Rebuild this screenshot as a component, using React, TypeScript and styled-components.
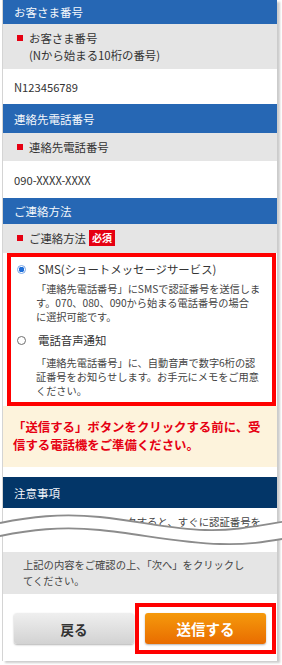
import styled, { createGlobalStyle } from "styled-components";

const GlobalStyle = createGlobalStyle`
  body {
    margin: 0;
    background: #fff;
    font-family: "Noto Sans CJK JP", "Noto Sans", sans-serif;
    color: #333;
  }
`;

const Page = styled.div`
  width: 282px;
  height: 665px;
  box-sizing: border-box;
  padding: 0 5px 0 2px;
  overflow: hidden;
`;

const Card = styled.div`
  background: #fff;
  border-left: 1px solid #d4d4d4;
  box-shadow: 3px 2px 2px rgba(0, 0, 0, 0.2);
  padding-bottom: 7px;
`;

const SectionHead = styled.div<{ $h: number; $navy?: boolean }>`
  height: ${(p) => p.$h}px;
  display: flex;
  align-items: center;
  padding-left: 11px;
  background: ${(p) => (p.$navy ? "#033668" : "#2667b4")};
  color: #f4f7fb;
  font-size: 11.5px;
`;

const LabelRow = styled.div<{ $h: number }>`
  min-height: ${(p) => p.$h}px;
  box-sizing: border-box;
  display: flex;
  align-items: flex-start;
  padding: 6px 0 0 14px;
  background: #e5e5e5;
  font-size: 11.4px;
  line-height: 17px;
`;

const Marker = styled.span`
  width: 6px;
  height: 6px;
  margin: 5px 6px 0 0;
  background: #e60012;
  flex-shrink: 0;
`;

const Badge = styled.span`
  display: inline-block;
  margin-left: 3px;
  padding: 0 3px;
  height: 16px;
  line-height: 16px;
  background: #e60012;
  color: #fff;
  font-size: 10px;
  font-weight: bold;
  vertical-align: 1px;
`;

const ValueRow = styled.div<{ $h: number }>`
  height: ${(p) => p.$h}px;
  display: flex;
  align-items: center;
  padding-left: 11px;
  font-size: 11.2px;
  color: #333;
`;

const ChoiceBox = styled.div`
  margin: 0 1px 0 4px;
  border: 4px solid #ff0000;
  padding: 3px 6px 4px 6px;
`;

const OptionTitle = styled.label<{ $gap: number }>`
  display: flex;
  align-items: center;
  margin-top: ${(p) => p.$gap}px;
  height: 18px;
  font-size: 11.4px;
  color: #333;
`;

const Radio = styled.span<{ $on?: boolean }>`
  width: 9px;
  height: 9px;
  box-sizing: border-box;
  border-radius: 50%;
  margin-right: 12px;
  border: 1px solid ${(p) => (p.$on ? "#7aa6e6" : "#6f6f6f")};
  background: ${(p) =>
    p.$on ? "radial-gradient(circle, #1f6fd8 0 2.6px, #fff 3px)" : "#fff"};
`;

const OptionDesc = styled.p<{ $gap: number }>`
  margin: ${(p) => p.$gap}px 0 0 19px;
  font-size: 10.2px;
  line-height: 14px;
  color: #444;
  white-space: nowrap;
`;

const Notice = styled.p`
  margin: 0;
  padding: 13px 0 13px 10px;
  background: #fdf3dc;
  color: #e60012;
  font-weight: bold;
  font-size: 12.4px;
  line-height: 17.5px;
  white-space: nowrap;
`;

const Spacer = styled.div`
  height: 10px;
`;

const Torn = styled.div`
  position: relative;
  height: 44px;
`;

const TornText = styled.p`
  margin: 0;
  padding: 6px 16px 0 0;
  text-align: right;
  white-space: nowrap;
  overflow: hidden;
  font-size: 10.4px;
  color: #444;
`;

const TearSvg = styled.svg`
  position: absolute;
  left: -3px;
  top: 0;
  overflow: visible;
`;

const Note = styled.p`
  margin: 0;
  padding: 5px 0 5px 20px;
  background: #e5e5e5;
  font-size: 10.3px;
  line-height: 16px;
  color: #444;
`;

const Actions = styled.div`
  display: flex;
  align-items: center;
  gap: 1px;
  padding: 9px 0 0 11px;
`;

const Button = styled.button<{ $primary?: boolean }>`
  width: ${(p) => (p.$primary ? 121 : 120)}px;
  height: 31px;
  border: none;
  border-radius: 3px;
  font-family: inherit;
  font-weight: bold;
  font-size: ${(p) => (p.$primary ? 14.5 : 13.5)}px;
  color: ${(p) => (p.$primary ? "#fff" : "#333")};
  background: ${(p) =>
    p.$primary
      ? "linear-gradient(#f59a0c, #e96c00)"
      : "linear-gradient(#efefef, #d2d2d2)"};
  box-shadow: 0 1px 2px rgba(0, 0, 0, 0.3);
  cursor: pointer;
`;

const Highlight = styled.div`
  border: 4px solid #ff0000;
  padding: 6px;
  background: #fff;
`;

const line1 = "M0 15 C30 9 60 5 100 9 C140 13 170 21 205 22 C240 23 265 16 288 13";
const line2 = "M0 28 C30 22 60 18 100 22 C140 26 180 35 220 36 C250 37 270 33 288 30";
const gapFill =
  "M0 15 C30 9 60 5 100 9 C140 13 170 21 205 22 C240 23 265 16 288 13 " +
  "L288 30 C270 33 250 37 220 36 C180 35 140 26 100 22 C60 18 30 22 0 28 Z";

const App = () => {
  return (
    <Page>
      <GlobalStyle />
      <Card>
        <SectionHead $h={24}>お客さま番号</SectionHead>
        <LabelRow $h={45}>
          <Marker />
          <span>
            お客さま番号
            <br />
            (Nから始まる10桁の番号)
          </span>
        </LabelRow>
        <ValueRow $h={35}>N123456789</ValueRow>

        <SectionHead $h={29}>連絡先電話番号</SectionHead>
        <LabelRow $h={28}>
          <Marker />
          <span>連絡先電話番号</span>
        </LabelRow>
        <ValueRow $h={37}>090-XXXX-XXXX</ValueRow>

        <SectionHead $h={26}>ご連絡方法</SectionHead>
        <LabelRow $h={29}>
          <Marker />
          <span>
            ご連絡方法<Badge>必須</Badge>
          </span>
        </LabelRow>

        <ChoiceBox>
          <OptionTitle $gap={0}>
            <Radio $on />
            SMS(ショートメッセージサービス)
          </OptionTitle>
          <OptionDesc $gap={4}>
            「連絡先電話番号」にSMSで認証番号を送信しま
            <br />
            す。070、080、090から始まる電話番号の場合
            <br />
            に選択可能です。
          </OptionDesc>
          <OptionTitle $gap={7}>
            <Radio />
            電話音声通知
          </OptionTitle>
          <OptionDesc $gap={7}>
            「連絡先電話番号」に、自動音声で数字6桁の認
            <br />
            証番号をお知らせします。お手元にメモをご用意
            <br />
            ください。
          </OptionDesc>
        </ChoiceBox>

        <Notice>
          「送信する」ボタンをクリックする前に、受
          <br />
          信する電話機をご準備ください。
        </Notice>
        <Spacer />

        <SectionHead $h={31} $navy>
          注意事項
        </SectionHead>
        <Torn>
          <TornText>ボタンをクリックすると、すぐに認証番号を</TornText>
          <TearSvg width="288" height="44" viewBox="0 0 288 44">
            <path d={gapFill} fill="#fff" />
            <path d={line1} fill="none" stroke="#8c8c8c" strokeWidth="1.8" />
            <path d={line2} fill="none" stroke="#8c8c8c" strokeWidth="1.8" />
          </TearSvg>
        </Torn>
        <Note>
          上記の内容をご確認の上、「次へ」をクリックし
          <br />
          てください。
        </Note>

        <Actions>
          <Button>戻る</Button>
          <Highlight>
            <Button $primary>送信する</Button>
          </Highlight>
        </Actions>
      </Card>
    </Page>
  );
};

export default App;
